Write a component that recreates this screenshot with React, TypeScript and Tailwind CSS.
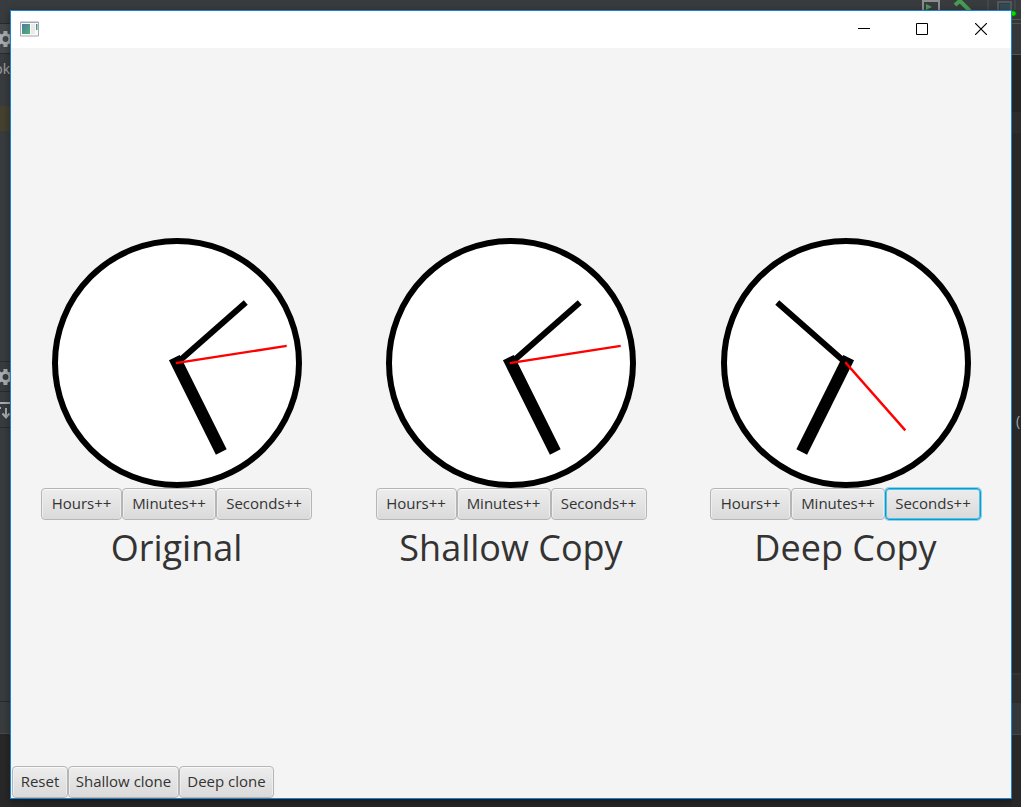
import type { ReactNode } from "react";
import clsx from "clsx";

type Point = [number, number];

type ClockData = {
  label: string;
  hour: Point;
  minute: Point;
  second: Point;
  focused?: boolean;
};

const clocks: ClockData[] = [
  { label: "Original", hour: [66.5, -58.5], minute: [41.6, 83.6], second: [108.5, -17] },
  { label: "Shallow Copy", hour: [66.5, -58.5], minute: [41.6, 83.6], second: [108.5, -17] },
  { label: "Deep Copy", hour: [-66.5, -58.5], minute: [-41.6, 83.6], second: [58.5, 66.5], focused: true },
];

function FxButton({ children, className, focused }: { children: ReactNode; className: string; focused?: boolean }) {
  return (
    <button
      type="button"
      className={clsx(
        "flex h-8 items-center justify-center rounded-[4px] border bg-linear-to-b from-[#ededed] to-[#dadada] pb-[2px] text-[15px] leading-5 whitespace-nowrap text-[#333]",
        focused
          ? "relative border-[#039ed3] shadow-[0_0_0_1px_#8fd3ea,inset_0_0_0_1px_#5fbfe0]"
          : "border-[#b5b5b5] shadow-[inset_0_1px_0_#f8f8f8,inset_1px_0_0_#eee,inset_-1px_0_0_#eee]",
        className,
      )}
    >
      {children}
    </button>
  );
}

function Clock({ hour, minute, second, label }: ClockData) {
  return (
    <svg width="250" height="250" viewBox="-125 -125 250 250" role="img" aria-label={label} strokeLinecap="square">
      <circle r="122" fill="#fff" stroke="#000" strokeWidth="6" />
      <line x2={hour[0]} y2={hour[1]} stroke="#000" strokeWidth="6" />
      <line x2={minute[0]} y2={minute[1]} stroke="#000" strokeWidth="12" />
      <line x2={second[0]} y2={second[1]} stroke="#f00" strokeWidth="2.4" />
    </svg>
  );
}

function Gear() {
  return (
    <svg width="10" height="18" viewBox="0 0 10 18" className="block">
      <g fill="none" stroke="#a9acae">
        <circle cx="5.5" cy="9" r="4.4" strokeWidth="3" />
        <path d="M5.5 1v3M5.5 14v3M-1.4 5l2.6 1.5M-1.4 13l2.6-1.5M12.4 5 9.8 6.5M12.4 13 9.8 11.5" strokeWidth="4" />
      </g>
    </svg>
  );
}

function LeftStrip() {
  return (
    <div className="flex w-[10px] shrink-0 flex-col overflow-hidden bg-[#393c3e] text-[14px] text-[#a0a3a5]">
      <div className="h-[14px] border-b border-[#2b2b2b]" />
      <div className="flex h-[30px] items-center border-b border-[#2a2b2c] bg-[#44484a]">
        <Gear />
      </div>
      <div className="flex h-[52px] items-start justify-end pt-[5px] leading-5">ok</div>
      <div className="h-[25px] bg-[#454130]" />
      <div className="h-[231px] border-b border-[#2b2b2b]" />
      <div className="flex h-[30px] items-center border-b border-[#2b2b2b]">
        <Gear />
      </div>
      <div className="h-[36px] border-b border-[#2b2b2b] pt-[10px]">
        <svg width="10" height="18" viewBox="0 0 10 18" fill="none" stroke="#a9acae">
          <path d="M0 1h10" strokeWidth="2" />
          <path d="M6 6v9M2.5 11.5 6 15.5l3.5-4M0 6h1" strokeWidth="2" />
        </svg>
      </div>
      <div className="h-[274px] border-b border-[#292929]" />
      <div className="h-[32px] border-b border-[#4a4a4a] bg-[#393d3f]" />
      <div className="flex-1 bg-[#282828]" />
    </div>
  );
}

function RightStrip() {
  return (
    <div className="flex w-[9px] shrink-0 flex-col overflow-hidden bg-[#282828]">
      <div className="h-[10px] border-b border-[#555] bg-[#35383a]">
        <svg width="9" height="9" viewBox="0 0 9 9" className="block">
          <circle cx="1.5" cy="3.5" r="2.8" fill="#00e000" stroke="#086008" />
        </svg>
      </div>
      <div className="h-[4px] border-b border-[#505254] bg-[#35383a]" />
      <div className="h-[31px] border-b border-[#505254] bg-[#35383a]" />
      <div className="h-[57px] bg-[#252525]" />
      <div className="h-[21px] bg-[#2c2c2c]" />
      <div className="flex h-[540px] flex-col justify-center pl-1">
        <span className="pt-[36px] text-[14px] leading-5 text-[#9da8b5]">(</span>
      </div>
      <div className="h-[30px] border-t-2 border-[#333] bg-[#2d2d2d]" />
      <div className="h-[32px] border-b border-[#464646] bg-[#34383a]" />
    </div>
  );
}

function TopStrip() {
  return (
    <div className="flex h-[10px] shrink-0 justify-end overflow-hidden bg-[#393c3e]">
      <svg width="101" height="10" viewBox="0 0 101 10" fill="none">
        <path d="M3 10V1h16v9" stroke="#8b8d8f" strokeWidth="2" />
        <path d="m6 4 6 3-6 3z" fill="#499c54" />
        <path d="m35 5 6-5M40 1l10 10" stroke="#499c54" strokeWidth="4" />
        <path d="M68 0v10M95 0v10" stroke="#505254" />
        <path d="M78 10V2h13v8" stroke="#505960" strokeWidth="2" />
        <path d="M80 4h10v6H80z" fill="#344b57" />
      </svg>
    </div>
  );
}

function TitleBar() {
  return (
    <header className="flex h-[37px] shrink-0 items-center justify-between bg-white pb-[2px] pl-[9px]">
      <svg width="20" height="16" viewBox="0 0 20 16" aria-hidden="true">
        <defs>
          <linearGradient id="app" x1="0" y1="0" x2="1" y2="1">
            <stop stopColor="#4d78ad" />
            <stop offset="1" stopColor="#50b56a" />
          </linearGradient>
        </defs>
        <path d="M.5 1h18v14H.5z" fill="#fafafa" stroke="#a5a8b4" />
        <path d="M1 1.500h17" stroke="#a5a8b4" />
        <path d="M2 3h8v10H2z" fill="url(#app)" />
        <path d="M11 3h4v10h-4z" fill="#e9eaec" />
        <path d="M16 3h1.500v6H16z" fill="url(#app)" />
      </svg>
      <div className="flex h-full">
        <button type="button" aria-label="Minimize" className="flex w-[58px] items-center justify-center">
          <svg width="12" height="12" viewBox="0 0 12 12" stroke="#000">
            <path d="M0 5.500h12" />
          </svg>
        </button>
        <button type="button" aria-label="Maximize" className="flex w-[58px] items-center justify-center">
          <svg width="12" height="12" viewBox="0 0 12 12" fill="none" stroke="#000">
            <path d="M.5.5h11v11H.5z" />
          </svg>
        </button>
        <button type="button" aria-label="Close" className="flex w-[60px] items-center justify-center">
          <svg width="12" height="12" viewBox="0 0 12 12" stroke="#000" strokeWidth="1.2">
            <path d="m0 0 12 12M12 0 0 12" />
          </svg>
        </button>
      </div>
    </header>
  );
}

export default function App() {
  return (
    <div className="flex min-h-screen flex-col bg-[#272727] font-['Open_Sans','Noto_Sans',sans-serif]">
      <TopStrip />
      <div className="flex flex-1">
        <LeftStrip />
        <div className="mb-2 flex min-w-0 flex-1 flex-col border border-[#1883d7] bg-[#f4f4f4] shadow-[0_2px_8px_rgba(0,0,0,0.4)]">
          <TitleBar />
          <main className="flex flex-1 items-center justify-between px-[30px]">
            {clocks.map((clock) => (
              <section key={clock.label} className="flex flex-col items-center">
                <Clock {...clock} />
                <div className="flex">
                  <FxButton className="w-[81px]">Hours++</FxButton>
                  <FxButton className="w-[94px]">Minutes++</FxButton>
                  <FxButton className="w-[96px]" focused={clock.focused}>
                    Seconds++
                  </FxButton>
                </div>
                <h2 className="text-[36px] leading-[56px] text-[#333]">{clock.label}</h2>
              </section>
            ))}
          </main>
          <footer className="flex pl-px">
            <FxButton className="w-[56px]">Reset</FxButton>
            <FxButton className="w-[111px]">Shallow clone</FxButton>
            <FxButton className="w-[95px]">Deep clone</FxButton>
          </footer>
        </div>
        <RightStrip />
      </div>
    </div>
  );
}
